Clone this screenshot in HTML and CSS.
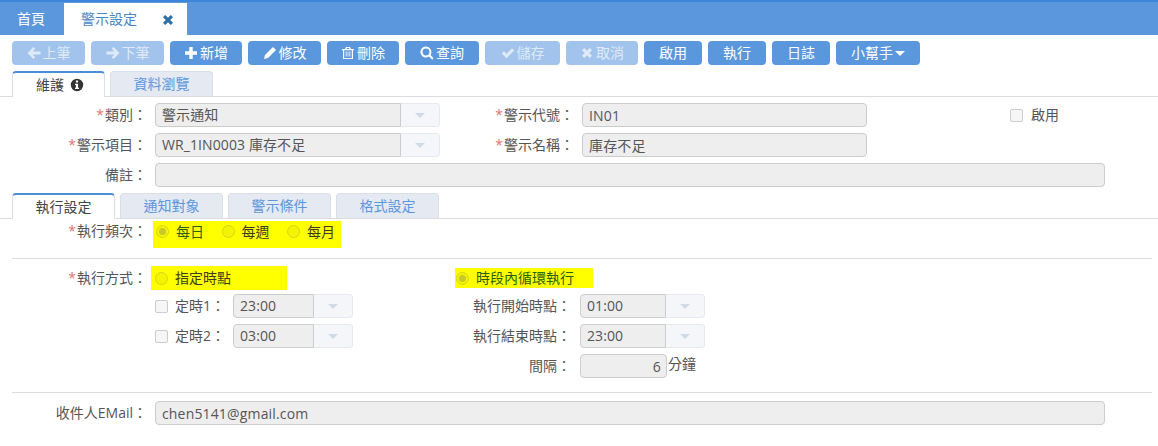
FILE: index.html
```html
<!DOCTYPE html>
<html lang="zh-Hant">
<head>
<meta charset="utf-8">
<title>警示設定</title>
<link rel="stylesheet" href="styles.css">
</head>
<body>
<header class="topbar">
  <a class="top-tab">首頁</a>
  <a class="top-tab active">警示設定
    <svg class="close" viewBox="0 0 12 12"><path d="M1 3.2 3.2 1 6 3.8 8.8 1 11 3.2 8.2 6 11 8.8 8.8 11 6 8.2 3.2 11 1 8.8 3.8 6Z"/></svg>
  </a>
</header>
<div class="toolbar">
  <button class="btn off w73"><svg class="ic" viewBox="0 0 14 14"><path d="M6.500 1 8.200 2.700 5.600 5.500H13.500V8.500H5.600L8.200 11.300 6.500 13 .5 7Z"/></svg>上筆</button>
  <button class="btn off w73"><svg class="ic" viewBox="0 0 14 14"><path d="M7.500 1 5.800 2.700 8.400 5.500H.5V8.500H8.400L5.800 11.300 7.500 13 13.500 7Z"/></svg>下筆</button>
  <button class="btn w72"><svg class="ic" viewBox="0 0 14 14"><path d="M5.300 1H8.700V5.300H13V8.700H8.700V13H5.300V8.700H1V5.300H5.300Z"/></svg>新增</button>
  <button class="btn w73"><svg class="ic" viewBox="0 0 14 14"><path d="M10 1 13 4 5 12 1 13 2 9Z"/></svg>修改</button>
  <button class="btn w72"><svg class="ic" viewBox="0 0 14 14"><path fill-rule="evenodd" d="M5 1H9L10 3H13V4.200H12V13H2V4.200H1V3H4ZM5.500 3H8.500L8.200 2.100H5.800ZM3.200 4.200V11.900H10.800V4.200ZM4.700 5.500H5.600V10.500H4.700ZM6.600 5.500H7.400V10.500H6.600ZM8.400 5.500H9.300V10.500H8.400Z"/></svg>刪除</button>
  <button class="btn w74"><svg class="ic" viewBox="0 0 14 14"><path fill-rule="evenodd" d="M6 .5A5.500 5.500 0 0 1 10.500 9L13.700 12.200 12.200 13.700 9 10.500A5.500 5.500 0 1 1 6 .5ZM6 2.600A3.400 3.400 0 1 0 6 9.400 3.400 3.400 0 0 0 6 2.600Z"/></svg>查詢</button>
  <button class="btn off w75"><svg class="ic" viewBox="0 0 14 14"><path d="M.8 7.500 3 5.300 5.500 7.800 11 2.300 13.200 4.500 5.500 12.200Z"/></svg>儲存</button>
  <button class="btn off w72"><svg class="ic" viewBox="0 0 14 14"><path d="M2 4.200 4.200 2 7 4.800 9.800 2 12 4.200 9.200 7 12 9.800 9.800 12 7 9.200 4.200 12 2 9.800 4.800 7Z"/></svg>取消</button>
  <button class="btn w58">啟用</button>
  <button class="btn w58">執行</button>
  <button class="btn w58">日誌</button>
  <button class="btn w84">小幫手<span class="caret"></span></button>
</div>

<nav class="tabs first">
  <a class="tab active w93 shift">維護
    <svg class="info" viewBox="0 0 14 14"><path fill-rule="evenodd" d="M7 .8A6.200 6.200 0 1 1 7 13.200 6.200 6.200 0 0 1 7 .8ZM5.900 2.600V4.500H8.100V2.600ZM5 5.800V7H5.900V9.800H5V11H9V9.800H8.100V5.800Z"/></svg>
  </a>
  <a class="tab w103">資料瀏覽</a>
</nav>

<section class="form">
  <div class="row r1">
    <label class="lb l1 req">類別：</label>
    <div class="combo w285"><span class="val">警示通知</span><span class="drop"><i></i></span></div>
    <label class="lb l2 req">警示代號：</label>
    <div class="input w285">IN01</div>
    <label class="check enable"><span class="box"></span>啟用</label>
  </div>
  <div class="row r1">
    <label class="lb l1 req">警示項目：</label>
    <div class="combo w285"><span class="val">WR_1IN0003 庫存不足</span><span class="drop"><i></i></span></div>
    <label class="lb l2 req">警示名稱：</label>
    <div class="input w285">庫存不足</div>
  </div>
  <div class="row r1">
    <label class="lb l1">備註：</label>
    <div class="input w950"></div>
  </div>
</section>

<nav class="tabs second">
  <a class="tab active w103">執行設定</a>
  <a class="tab w103">通知對象</a>
  <a class="tab w103">警示條件</a>
  <a class="tab w103">格式設定</a>
</nav>

<section class="exec">
  <div class="row freq">
    <label class="lb l1 req">執行頻次：</label>
    <div class="mark mark-freq">
      <span class="radio on"></span><span class="rt sel">每日</span>
      <span class="radio"></span><span class="rt">每週</span>
      <span class="radio"></span><span class="rt">每月</span>
    </div>
  </div>
  <hr class="rule r-a">
  <div class="method">
    <div class="col-a">
      <div class="row head">
        <label class="lb l1 req">執行方式：</label>
        <div class="mark mark-a"><span class="radio"></span><span class="rt">指定時點</span></div>
      </div>
      <div class="row time">
        <span class="box"></span><span class="tl">定時1：</span>
        <div class="combo w120"><span class="val">23:00</span><span class="drop"><i></i></span></div>
      </div>
      <div class="row time">
        <span class="box"></span><span class="tl">定時2：</span>
        <div class="combo w120"><span class="val">03:00</span><span class="drop"><i></i></span></div>
      </div>
    </div>
    <div class="col-b">
      <div class="head-b"><div class="mark mark-b"><span class="radio on"></span><span class="rt sel">時段內循環執行</span></div></div>
      <div class="row time">
        <label class="lb l3">執行開始時點：</label>
        <div class="combo w125"><span class="val">01:00</span><span class="drop"><i></i></span></div>
      </div>
      <div class="row time">
        <label class="lb l3">執行結束時點：</label>
        <div class="combo w125"><span class="val">23:00</span><span class="drop"><i></i></span></div>
      </div>
      <div class="row time">
        <label class="lb l3">間隔：</label>
        <div class="input w87 right">6</div><span class="unit">分鐘</span>
      </div>
    </div>
  </div>
  <hr class="rule r-b">
  <div class="row r1">
    <label class="lb l1">收件人EMail：</label>
    <div class="input w950">chen5141@gmail.com</div>
  </div>
</section>
</body>
</html>
```
FILE: styles.css
```css
* { box-sizing: border-box; }
html, body { margin: 0; padding: 0; }
body {
  width: 1158px;
  height: 446px;
  overflow: hidden;
  background: #fff;
  color: #555;
  font: 14px/20px "Open Sans", "Noto Sans CJK TC", sans-serif;
}
.topbar {
  height: 35px;
  padding-top: 1px;
  display: flex;
  background: #5b97dc;
  border-top: 2px solid #3f85d9;
}
.top-tab {
  width: 64px;
  padding-left: 17px;
  line-height: 32px;
  color: #fff;
}
.top-tab.active {
  width: 123px;
  background: #fff;
  color: #4a86c5;
  display: flex;
  align-items: center;
  padding-left: 17px;
}
.close { width: 12px; height: 12px; margin-left: 25px; margin-top: 2px; fill: #2f6ea8; }

.toolbar { display: flex; gap: 6px; padding: 6px 0 0 12px; height: 36px; }
.btn {
  height: 24px;
  padding: 0;
  border: 0;
  border-radius: 4px;
  background: #5b97dc;
  color: #fff;
  font: inherit;
  display: flex;
  align-items: center;
  justify-content: center;
}
.btn.off { background: #a2c4ec; color: #dfeaf8; }
.w58 { width: 58px; } .w72 { width: 72px; } .w73 { width: 73px; } .w74 { width: 74px; } .w75 { width: 75px; } .w84 { width: 84px; }
.ic { width: 14px; height: 14px; margin-right: 2px; fill: currentColor; }
.caret {
  width: 0; height: 0; margin-left: 2px;
  border: 5px solid transparent;
  border-top-color: #fff;
  border-bottom: 0;
}

.tabs { display: flex; gap: 5px; padding-left: 12px; border-bottom: 1px solid #dcdcdc; height: 26px; }
.tabs.second { margin-top: 6px; }
.tab {
  height: 25px;
  display: flex;
  align-items: center;
  justify-content: center;
  background: #e4e9f2;
  border: 1px solid #d9dee8;
  border-bottom: 0;
  border-radius: 4px 4px 0 0;
  color: #5b97dc;
  white-space: nowrap;
}
.tab.active {
  height: 26px;
  background: #fff;
  color: #444;
  border-top: 2px solid #4a90d9;
  border-bottom: 0;
}
.tab.shift { padding-left: 3px; }
.w93 { width: 93px; } .w103 { width: 103px; }
.info { width: 14px; height: 14px; margin-left: 6px; fill: #333; }

.form { padding-top: 6px; display: flex; flex-direction: column; gap: 6px; }
.row { display: flex; align-items: center; }
.r1 { height: 24px; }
.lb { flex: none; text-align: right; color: #555; white-space: nowrap; }
.l1 { width: 147px; margin-right: 8px; }
.l2 { width: 134px; margin-right: 8px; }
.l3 { width: 131px; margin-right: 9px; }
.req::before { content: "*"; color: #e0736f; margin-right: 1px; }

.input, .combo { height: 24px; flex: none; }
.input {
  padding: 0 6px;
  line-height: 24px;
  background: #eee;
  border: 1px solid #ccc;
  border-radius: 4px;
  color: #555;
  letter-spacing: .16px;
}
.input.right { text-align: right; padding-right: 5px; }
.w285 { width: 285px; } .w950 { width: 950px; } .w87 { width: 87px; }
.w120 { width: 120px; } .w125 { width: 125px; }
.combo { display: flex; }
.val {
  flex: 1;
  padding: 0 5px 0 6px;
  line-height: 22px;
  background: #eee;
  border: 1px solid #ccc;
  border-radius: 4px 0 0 4px;
  color: #555;
  letter-spacing: .1px;
  white-space: nowrap;
}
.drop {
  flex: none;
  width: 39px;
  display: flex;
  align-items: center;
  justify-content: center;
  background: #f4f6fa;
  border: 1px solid #e6e9ef;
  border-left: 0;
  border-radius: 0 4px 4px 0;
}
.drop i {
  width: 0; height: 0;
  border: 5px solid transparent;
  border-top-color: #d3dae5;
  border-bottom: 0;
}
.check { display: flex; align-items: center; white-space: nowrap; }
.enable { margin-left: 143px; }
.box {
  flex: none;
  width: 13px; height: 13px;
  margin-right: 8px;
  background: #f6f6f6;
  border: 1px solid #ccc;
  border-radius: 2px;
}
.exec { display: block; }
.freq { height: 30px; align-items: flex-start; }
.freq .lb { margin-top: 2px; margin-right: 6px; }
.mark { display: flex; align-items: center; background: #ff0; flex: none; white-space: nowrap; }
.mark-freq { width: 188px; height: 27px; margin-top: 2px; padding: 0 0 6px 3px; }
.rt { flex: none; margin-right: 17.5px; color: #3c3c20; }
.rt.sel { color: #2a6010; }
.radio {
  flex: none;
  width: 13px; height: 13px;
  margin-right: 7px;
  border: 1px solid #d4d41e;
  border-radius: 50%;
  background: #f4f400;
  position: relative;
}
.radio.on::after {
  content: "";
  position: absolute;
  inset: 2px;
  border-radius: 50%;
  background: #c8c82a;
}
.rule { margin: 0 6px 0 12px; border: 0; border-top: 1px solid #dcdcdc; }
.r-a { margin-top: 9px; }
.r-b { margin-top: 7px; }
.method { display: flex; height: 119px; margin-top: 7px; }
.col-a { width: 440px; flex: none; }
.col-b { flex: none; }
.head { height: 24px; margin-bottom: 4px; }
.head .lb { margin-right: 4px; }
.mark-a { width: 136px; height: 24px; padding-left: 4px; }
.head-b { height: 28px; padding: 2px 0 0 15px; }
.mark-b { width: 138px; height: 20px; padding-left: 1px; }
.time { height: 24px; margin-bottom: 6px; }
.col-a .time { padding-left: 155px; }
.tl { width: 58px; flex: none; white-space: nowrap; }
.col-a .box { margin-right: 7px; }
.unit { margin-left: 1px; margin-top: -4px; white-space: nowrap; }
.r-b + .row { margin-top: 8px; }
```
